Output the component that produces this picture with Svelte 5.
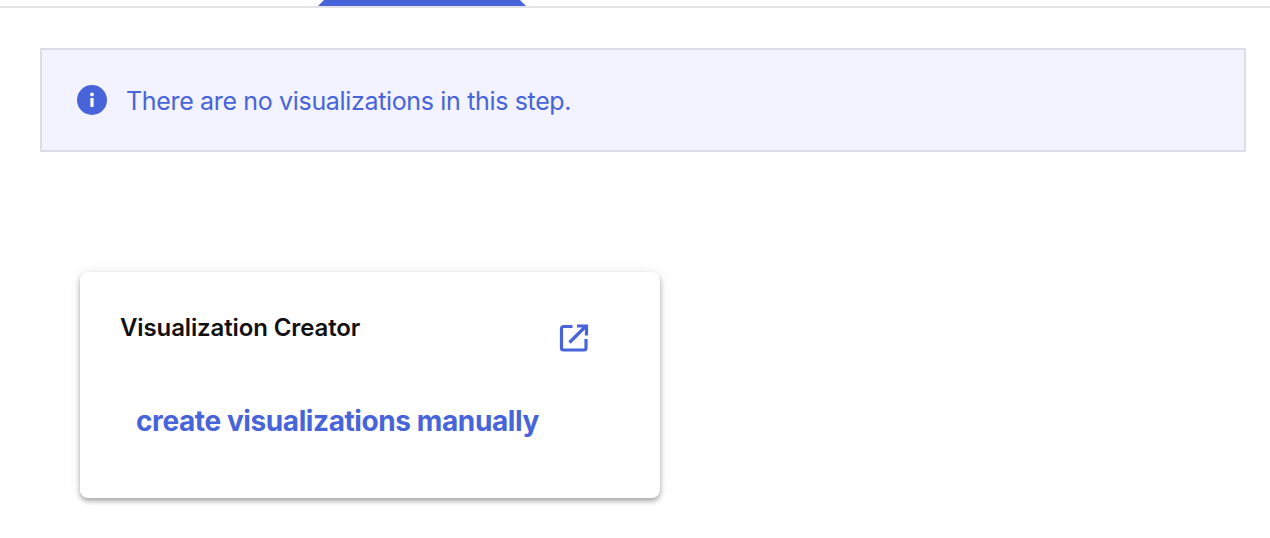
<script>
  const message = 'There are no visualizations in this step.';
</script>

<div class="page">
  <div class="tabs">
    <div class="active-tab"></div>
  </div>

  <div class="alert">
    <svg class="info" viewBox="0 0 30 30" aria-hidden="true">
      <circle cx="15" cy="15" r="15" fill="#4864db" />
      <rect x="13.4" y="13" width="3.2" height="9" rx="0.4" fill="#fff" />
      <circle cx="15" cy="9.4" r="1.9" fill="#fff" />
    </svg>
    <span class="message">{message}</span>
  </div>

  <div class="card">
    <div class="card-head">
      <span class="title">Visualization Creator</span>
      <svg class="open" viewBox="0 0 30 30" aria-hidden="true">
        <path d="M13.500 3.500H4.500a2 2 0 0 0-2 2v19.500a2 2 0 0 0 2 2h20.500a2 2 0 0 0 2-2v-9" fill="none" stroke="#4864db" stroke-width="3.200" />
        <path d="M18 3h9.500v9.500M27 3 10.500 19.500" fill="none" stroke="#4864db" stroke-width="3.200" />
      </svg>
    </div>
    <span class="link">create visualizations manually</span>
  </div>
</div>

<style>
  :global(body) {
    margin: 0;
    background: #fff;
  }

  .page {
    height: 538px;
    overflow: hidden;
    font-family: Inter, 'Open Sans', sans-serif;
  }

  .tabs {
    height: 6px;
    border-bottom: 2px solid #e4e4e8;
    padding-left: 318px;
  }

  .active-tab {
    width: 208px;
    height: 6px;
    background: #4864db;
    clip-path: polygon(6px 0, 202px 0, 100% 100%, 0 100%);
  }

  .alert {
    box-sizing: border-box;
    display: flex;
    align-items: center;
    gap: 19px;
    width: 1206px;
    height: 104px;
    margin: 40px 0 0 40px;
    padding-left: 35px;
    background: #f2f3fe;
    border: 2px solid #dcdde6;
  }

  .info {
    width: 30px;
    height: 30px;
    flex: none;
  }

  .message {
    margin-top: 2px;
    color: #4864db;
    font-size: 25px;
    font-weight: 400;
    letter-spacing: -0.34px;
  }

  .card {
    box-sizing: border-box;
    width: 580px;
    height: 226px;
    margin: 120px 0 0 80px;
    padding: 40px 71px 0 40px;
    border-radius: 8px;
    background: #fff;
    box-shadow: 0 3px 5px rgba(0, 0, 0, 0.32), 0 0 14px rgba(0, 0, 0, 0.08);
  }

  .card-head {
    display: flex;
    justify-content: space-between;
    align-items: flex-start;
  }

  .title {
    color: #111;
    font-size: 24px;
    font-weight: 600;
    line-height: 32px;
    letter-spacing: -0.12px;
  }

  .open {
    width: 30px;
    height: 30px;
    margin-top: 11px;
    flex: none;
  }

  .link {
    display: block;
    margin: 50px 0 0 16px;
    color: #4864db;
    font-size: 28px;
    font-weight: 700;
    line-height: 36px;
    letter-spacing: -0.4px;
  }
</style>
